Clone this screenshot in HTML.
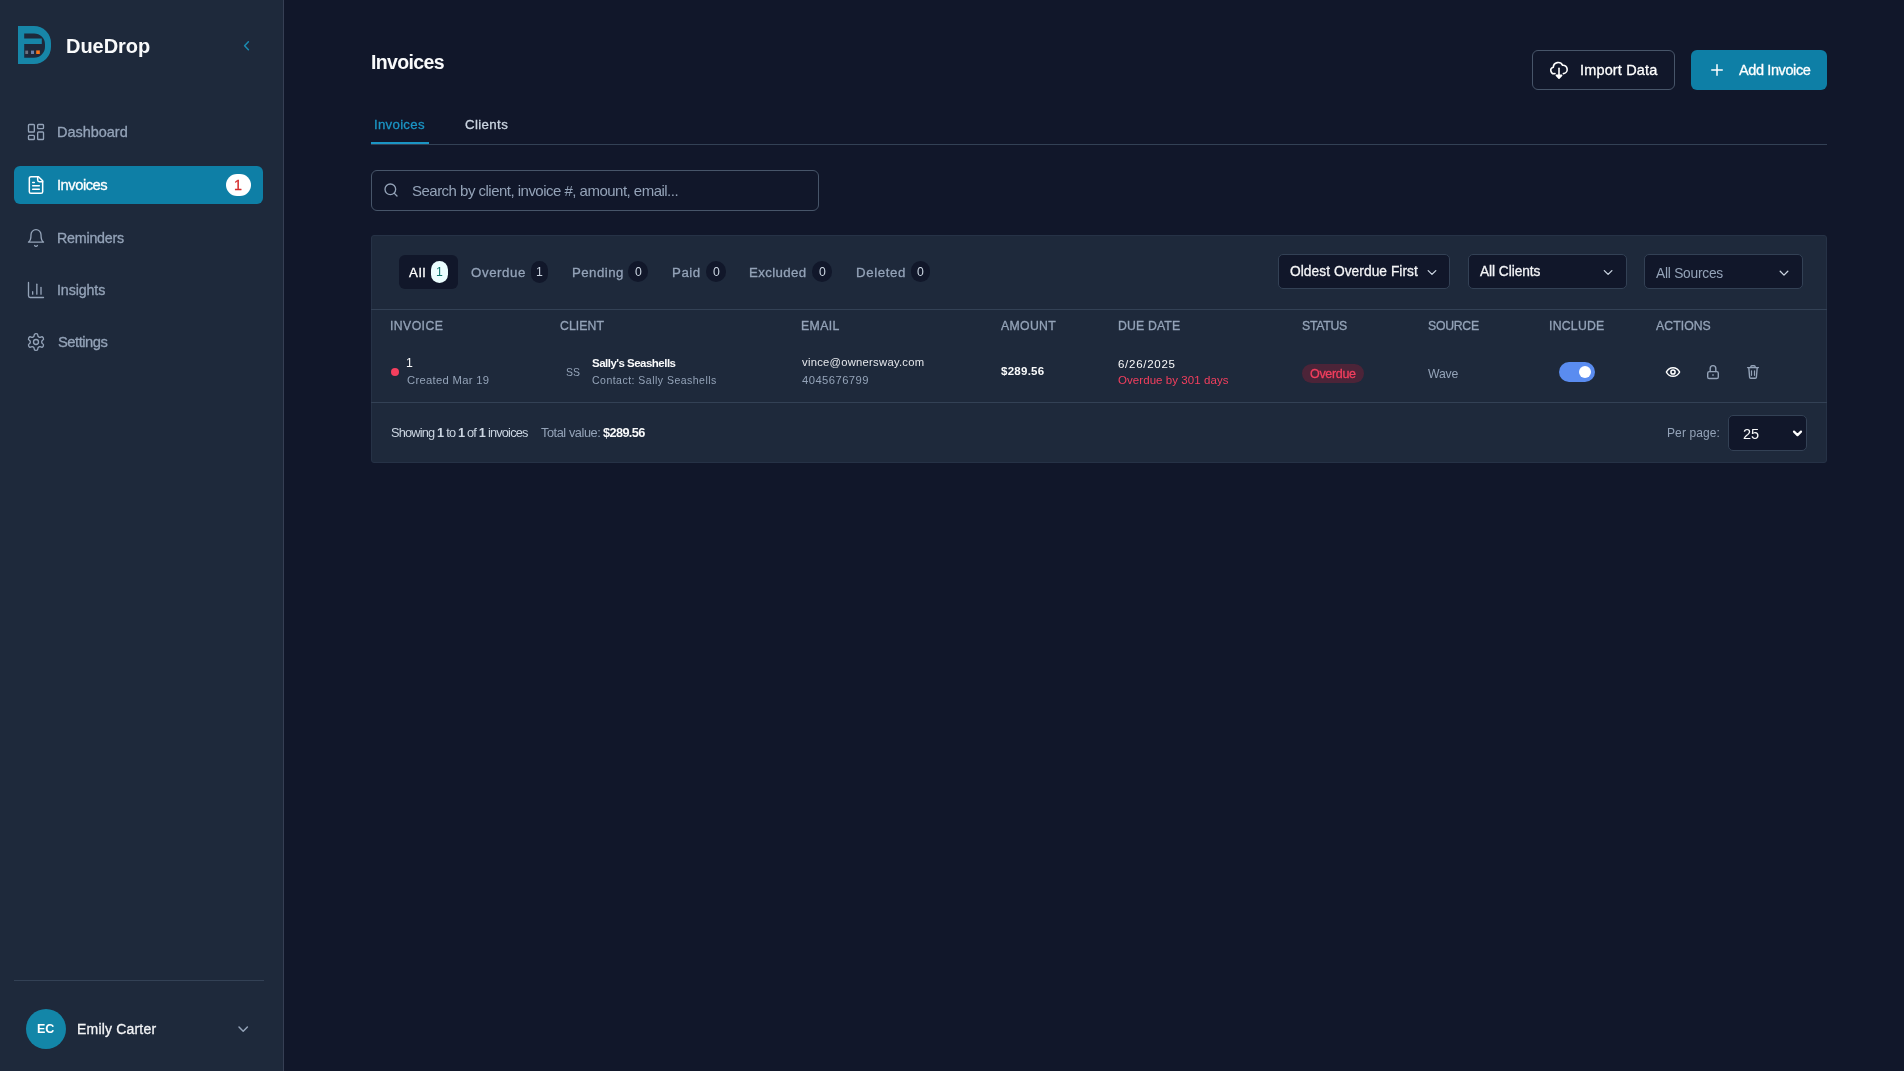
<!DOCTYPE html>
<html><head><meta charset="utf-8">
<style>
*{margin:0;padding:0;box-sizing:border-box}
html,body{width:1904px;height:1071px;overflow:hidden;background:#11172a;font-family:"Liberation Sans",sans-serif}
.t{position:absolute;white-space:nowrap;will-change:transform}
.a{position:absolute}
svg.i{position:absolute;fill:none;stroke-linecap:round;stroke-linejoin:round}
</style></head><body>
<!-- sidebar -->
<div class="a" style="left:0;top:0;width:284px;height:1071px;background:#1e293b;border-right:1px solid #363f54"></div>
<svg class="a" style="left:0;top:0" width="60" height="80" viewBox="0 0 60 80">
  <path d="M18 26H34A17 17 0 0 1 51 43V47A17 17 0 0 1 34 64H18Z M24.2 33.4H34A11 11 0 0 1 45 44.4V46.8A11 11 0 0 1 34 57.8H24.2Z" fill="#1786a8" fill-rule="evenodd"/>
  <rect x="24" y="38.5" width="17.8" height="5.5" fill="#1786a8"/>
  <rect x="25.3" y="50.6" width="2.8" height="3.4" fill="#6b7280"/>
  <rect x="31" y="50.6" width="3" height="3.4" fill="#6b7fa8"/>
  <rect x="36.2" y="50.4" width="3.6" height="3.6" fill="#f97316"/>
</svg>

<div class="a" style="left:14px;top:166px;width:249px;height:38px;background:#0e7fa6;border-radius:6px"></div>
<div class="a" style="left:226px;top:174px;width:25px;height:22px;background:#fff;border-radius:11px"></div>

<svg class="i" style="left:26px;top:122px" width="20" height="20" viewBox="0 0 24 24" stroke="#94a3b8" stroke-width="1.6"><rect width="7" height="9" x="3" y="3" rx="1"/><rect width="7" height="5" x="14" y="3" rx="1"/><rect width="7" height="9" x="14" y="12" rx="1"/><rect width="7" height="5" x="3" y="16" rx="1"/></svg>
<svg class="i" style="left:26px;top:175px" width="20" height="20" viewBox="0 0 24 24" stroke="#ffffff" stroke-width="1.8"><path d="M15 2H6a2 2 0 0 0-2 2v16a2 2 0 0 0 2 2h12a2 2 0 0 0 2-2V7Z"/><path d="M14 2v4a2 2 0 0 0 2 2h4"/><path d="M10 9H8"/><path d="M16 13H8"/><path d="M16 17H8"/></svg>
<svg class="i" style="left:26px;top:228px" width="20" height="20" viewBox="0 0 24 24" stroke="#94a3b8" stroke-width="1.6"><path d="M6 8a6 6 0 0 1 12 0c0 7 3 9 3 9H3s3-2 3-9"/><path d="M10.3 21a1.94 1.94 0 0 0 3.4 0"/></svg>
<svg class="i" style="left:26px;top:280px" width="20" height="20" viewBox="0 0 24 24" stroke="#94a3b8" stroke-width="1.6"><path d="M3 3v16a2 2 0 0 0 2 2h16"/><path d="M18 17V9"/><path d="M13 17V5"/><path d="M8 17v-3"/></svg>
<svg class="i" style="left:26px;top:332px" width="20" height="20" viewBox="0 0 24 24" stroke="#94a3b8" stroke-width="1.6"><path d="M12.22 2h-.44a2 2 0 0 0-2 2v.18a2 2 0 0 1-1 1.73l-.43.25a2 2 0 0 1-2 0l-.15-.08a2 2 0 0 0-2.73.73l-.22.38a2 2 0 0 0 .73 2.73l.15.1a2 2 0 0 1 1 1.72v.51a2 2 0 0 1-1 1.74l-.15.09a2 2 0 0 0-.73 2.73l.22.38a2 2 0 0 0 2.73.73l.15-.08a2 2 0 0 1 2 0l.43.25a2 2 0 0 1 1 1.73V20a2 2 0 0 0 2 2h.44a2 2 0 0 0 2-2v-.18a2 2 0 0 1 1-1.73l.43-.25a2 2 0 0 1 2 0l.15.08a2 2 0 0 0 2.73-.73l.22-.39a2 2 0 0 0-.73-2.73l-.15-.08a2 2 0 0 1-1-1.74v-.5a2 2 0 0 1 1-1.74l.15-.09a2 2 0 0 0 .73-2.73l-.22-.38a2 2 0 0 0-2.73-.73l-.15.08a2 2 0 0 1-2 0l-.43-.25a2 2 0 0 1-1-1.73V4a2 2 0 0 0-2-2z"/><circle cx="12" cy="12" r="3"/></svg>

<div class="a" style="left:14px;top:980px;width:250px;height:1px;background:#334155"></div>
<div class="a" style="left:26px;top:1009px;width:40px;height:40px;background:#1386a8;border-radius:50%"></div>

<!-- header -->
<div class="a" style="left:1532px;top:50px;width:143px;height:40px;border:1px solid #475569;border-radius:6px"></div>
<svg class="i" style="left:1545px;top:56px" width="28" height="28" viewBox="1545 56 28 28" stroke="#ffffff" stroke-width="1.6"><path d="M1555 73.6A3.2 3.2 0 0 1 1553.3 67.2A4.9 4.9 0 0 1 1562.6 65.3A3.9 3.9 0 0 1 1563.4 73.6"/><path d="M1559 68.2V77"/><path d="M1556.4 75.4L1559 78.2L1561.6 75.4Z" fill="#ffffff"/></svg>
<div class="a" style="left:1691px;top:50px;width:136px;height:40px;background:#0e7fa6;border-radius:6px"></div>
<svg class="i" style="left:1708px;top:61px" width="18" height="18" viewBox="0 0 24 24" stroke="#ffffff" stroke-width="2"><path d="M5 12h14"/><path d="M12 5v14"/></svg>

<div class="a" style="left:371px;top:144px;width:1456px;height:1px;background:#334155"></div>
<div class="a" style="left:371px;top:142px;width:58px;height:2px;background:#1b95c4"></div>

<div class="a" style="left:371px;top:170px;width:448px;height:41px;border:1px solid #475569;border-radius:6px;background:#11172a"></div>
<svg class="i" style="left:383px;top:182px" width="16" height="16" viewBox="0 0 24 24" stroke="#94a3b8" stroke-width="2"><circle cx="11" cy="11" r="8"/><path d="m21 21-4.3-4.3"/></svg>

<!-- card -->
<div class="a" style="left:371px;top:235px;width:1456px;height:228px;background:#1e293b;border:1px solid #263246;border-radius:3px"></div>
<div class="a" style="left:399px;top:255px;width:59px;height:34px;background:#11172a;border-radius:6px"></div>
<div class="a" style="left:431px;top:261px;width:17px;height:22px;background:#ecfeff;border-radius:11px"></div>
<div class="a" style="left:531px;top:261px;width:17px;height:22px;background:#11172a;border-radius:11px"></div>
<div class="a" style="left:628px;top:261px;width:20px;height:21px;background:#11172a;border-radius:11px"></div>
<div class="a" style="left:706px;top:261px;width:20px;height:21px;background:#11172a;border-radius:11px"></div>
<div class="a" style="left:812px;top:261px;width:20px;height:21px;background:#11172a;border-radius:11px"></div>
<div class="a" style="left:911px;top:261px;width:19px;height:21px;background:#11172a;border-radius:11px"></div>

<div class="a" style="left:1278px;top:254px;width:172px;height:35px;background:#11172a;border:1px solid #334155;border-radius:5px"></div>
<div class="a" style="left:1468px;top:254px;width:159px;height:35px;background:#11172a;border:1px solid #334155;border-radius:5px"></div>
<div class="a" style="left:1644px;top:254px;width:159px;height:35px;background:#11172a;border:1px solid #334155;border-radius:5px"></div>

<div class="a" style="left:371px;top:309px;width:1456px;height:1px;background:#334155"></div>
<div class="a" style="left:371px;top:402px;width:1456px;height:1px;background:#334155"></div>

<div class="a" style="left:391px;top:368px;width:8px;height:8px;background:#f43f5e;border-radius:50%"></div>
<div class="a" style="left:1302px;top:364px;width:62px;height:19px;background:#4c2438;border-radius:10px"></div>
<div class="a" style="left:1559px;top:362px;width:36px;height:20px;background:#5a8cf0;border-radius:10px"></div>
<div class="a" style="left:1578.7px;top:365.7px;width:12.6px;height:12.6px;background:#fff;border-radius:50%"></div>





<svg class="i" style="left:1660px;top:358px" width="106" height="28" viewBox="1660 358 106 28">
<g stroke="#ffffff" stroke-width="1.5"><path d="M1666.4 372C1669.2 366.2 1676.8 366.2 1679.6 372C1676.8 377.8 1669.2 377.8 1666.4 372Z"/><circle cx="1673" cy="372" r="2.1"/></g>
<g stroke="#94a3b8" stroke-width="1.4"><rect x="1707.7" y="371.6" width="10.6" height="6.9" rx="1.6"/><path d="M1710.2 371.6V368.4A2.8 2.8 0 0 1 1715.8 368.4V371.6"/><path d="M1713 374.8v.4"/>
<path d="M1747.6 367.6H1758.4"/><path d="M1750.9 367.6V366.6Q1750.9 365.7 1751.8 365.7H1754.2Q1755.1 365.7 1755.1 366.6V367.6"/><path d="M1748.8 367.6L1749.6 377.2Q1749.7 378.2 1750.7 378.2H1755.3Q1756.3 378.2 1756.4 377.2L1757.2 367.6"/><path d="M1751.5 370.8V375.3M1754.5 370.8V375.3" stroke-width="1.2"/></g>
</svg>
<div class="a" style="left:1728px;top:415px;width:79px;height:36px;background:#11172a;border:1px solid #334155;border-radius:5px"></div>

<svg class="i" style="left:0;top:0" width="1904" height="1071" viewBox="0 0 1904 1071">
<path d="M1428.2 270.6L1432 274.4L1435.8 270.6M1604.3 270.6L1608.1 274.4L1611.9 270.6M1780.2 271.3L1784 275.1L1787.8 271.3" stroke="#cbd5e1" stroke-width="1.3"/>
<path d="M1794 431.6L1797.5 435.1L1801 431.6" stroke="#ffffff" stroke-width="2.2"/>
<path d="M239 1027L243.2 1031.2L247.4 1027" stroke="#94a3b8" stroke-width="1.5"/>
<path d="M248.4 41.8L244.6 45.8L248.4 49.8" stroke="#1b8ab0" stroke-width="1.5"/>
</svg>
<div class="t" style="left:65.56px;top:35.87px;font-size:20.0px;line-height:20.0px;color:#f9fafb;font-weight:700;letter-spacing:-0.031px;">DueDrop</div>
<div class="t" style="left:57.41px;top:124.72px;font-size:14.5px;line-height:14.5px;color:#94a3b8;-webkit-text-stroke:0.3px #94a3b8;letter-spacing:-0.027px;">Dashboard</div>
<div class="t" style="left:57.24px;top:177.61px;font-size:14.75px;line-height:14.75px;color:#ffffff;-webkit-text-stroke:0.3px #ffffff;letter-spacing:-0.488px;">Invoices</div>
<div class="t" style="left:57.33px;top:230.93px;font-size:14.25px;line-height:14.25px;color:#94a3b8;-webkit-text-stroke:0.3px #94a3b8;letter-spacing:-0.215px;">Reminders</div>
<div class="t" style="left:57.18px;top:282.73px;font-size:14.25px;line-height:14.25px;color:#94a3b8;-webkit-text-stroke:0.3px #94a3b8;letter-spacing:-0.111px;">Insights</div>
<div class="t" style="left:57.83px;top:334.51px;font-size:14.75px;line-height:14.75px;color:#94a3b8;-webkit-text-stroke:0.3px #94a3b8;letter-spacing:-0.499px;">Settings</div>
<div class="t" style="left:234.24px;top:177.83px;font-size:14.25px;line-height:14.25px;color:#d42a2a;-webkit-text-stroke:0.3px #d42a2a;">1</div>
<div class="t" style="left:37.22px;top:1023.12px;font-size:12.5px;line-height:12.5px;color:#ffffff;font-weight:700;">EC</div>
<div class="t" style="left:77.25px;top:1021.85px;font-size:14.0px;line-height:14.0px;color:#f3f4f6;-webkit-text-stroke:0.3px #f3f4f6;letter-spacing:0.188px;">Emily Carter</div>
<div class="t" style="left:370.50px;top:52.89px;font-size:19.5px;line-height:19.5px;color:#f9fafb;font-weight:700;letter-spacing:-0.648px;">Invoices</div>
<div class="t" style="left:1579.66px;top:62.72px;font-size:14.5px;line-height:14.5px;color:#ffffff;-webkit-text-stroke:0.3px #ffffff;letter-spacing:0.159px;">Import Data</div>
<div class="t" style="left:1739.47px;top:62.72px;font-size:14.5px;line-height:14.5px;color:#ffffff;-webkit-text-stroke:0.3px #ffffff;letter-spacing:-0.390px;">Add Invoice</div>
<div class="t" style="left:374.18px;top:117.58px;font-size:13.25px;line-height:13.25px;color:#1b95c4;-webkit-text-stroke:0.3px #1b95c4;letter-spacing:0.271px;">Invoices</div>
<div class="t" style="left:464.53px;top:117.58px;font-size:13.25px;line-height:13.25px;color:#cbd5e1;-webkit-text-stroke:0.3px #cbd5e1;letter-spacing:0.375px;">Clients</div>
<div class="t" style="left:411.82px;top:182.70px;font-size:15.0px;line-height:15.0px;color:#94a3b8;letter-spacing:-0.517px;">Search by client, invoice #, amount, email...</div>
<div class="t" style="left:409.27px;top:265.58px;font-size:13.25px;line-height:13.25px;color:#ffffff;-webkit-text-stroke:0.3px #ffffff;letter-spacing:0.843px;">All</div>
<div class="t" style="left:471.17px;top:265.58px;font-size:13.25px;line-height:13.25px;color:#94a3b8;-webkit-text-stroke:0.3px #94a3b8;letter-spacing:0.599px;">Overdue</div>
<div class="t" style="left:571.51px;top:265.58px;font-size:13.25px;line-height:13.25px;color:#94a3b8;-webkit-text-stroke:0.3px #94a3b8;letter-spacing:0.452px;">Pending</div>
<div class="t" style="left:671.81px;top:265.58px;font-size:13.25px;line-height:13.25px;color:#94a3b8;-webkit-text-stroke:0.3px #94a3b8;letter-spacing:0.573px;">Paid</div>
<div class="t" style="left:748.91px;top:265.58px;font-size:13.25px;line-height:13.25px;color:#94a3b8;-webkit-text-stroke:0.3px #94a3b8;letter-spacing:0.362px;">Excluded</div>
<div class="t" style="left:855.51px;top:265.58px;font-size:13.25px;line-height:13.25px;color:#94a3b8;-webkit-text-stroke:0.3px #94a3b8;letter-spacing:0.612px;">Deleted</div>
<div class="t" style="left:436.09px;top:266.13px;font-size:12.25px;line-height:12.25px;color:#0f766e;">1</div>
<div class="t" style="left:536.09px;top:266.13px;font-size:12.25px;line-height:12.25px;color:#cbd5e1;">1</div>
<div class="t" style="left:634.59px;top:266.13px;font-size:12.25px;line-height:12.25px;color:#cbd5e1;">0</div>
<div class="t" style="left:712.59px;top:266.13px;font-size:12.25px;line-height:12.25px;color:#cbd5e1;">0</div>
<div class="t" style="left:818.79px;top:266.13px;font-size:12.25px;line-height:12.25px;color:#cbd5e1;">0</div>
<div class="t" style="left:917.19px;top:266.13px;font-size:12.25px;line-height:12.25px;color:#cbd5e1;">0</div>
<div class="t" style="left:1289.85px;top:265.06px;font-size:13.75px;line-height:13.75px;color:#f3f4f6;-webkit-text-stroke:0.3px #f3f4f6;letter-spacing:0.053px;">Oldest Overdue First</div>
<div class="t" style="left:1480.47px;top:265.06px;font-size:13.75px;line-height:13.75px;color:#f3f4f6;-webkit-text-stroke:0.3px #f3f4f6;letter-spacing:-0.071px;">All Clients</div>
<div class="t" style="left:1656.27px;top:267.36px;font-size:13.75px;line-height:13.75px;color:#94a3b8;letter-spacing:-0.232px;">All Sources</div>
<div class="t" style="left:390.17px;top:319.83px;font-size:12.25px;line-height:12.25px;color:#94a3b8;-webkit-text-stroke:0.3px #94a3b8;letter-spacing:0.414px;">INVOICE</div>
<div class="t" style="left:560.18px;top:319.83px;font-size:12.25px;line-height:12.25px;color:#94a3b8;-webkit-text-stroke:0.3px #94a3b8;letter-spacing:0.068px;">CLIENT</div>
<div class="t" style="left:800.80px;top:319.83px;font-size:12.25px;line-height:12.25px;color:#94a3b8;-webkit-text-stroke:0.3px #94a3b8;letter-spacing:0.412px;">EMAIL</div>
<div class="t" style="left:1001.08px;top:319.83px;font-size:12.25px;line-height:12.25px;color:#94a3b8;-webkit-text-stroke:0.3px #94a3b8;letter-spacing:0.325px;">AMOUNT</div>
<div class="t" style="left:1117.70px;top:319.83px;font-size:12.25px;line-height:12.25px;color:#94a3b8;-webkit-text-stroke:0.3px #94a3b8;letter-spacing:0.157px;">DUE DATE</div>
<div class="t" style="left:1302.44px;top:319.83px;font-size:12.25px;line-height:12.25px;color:#94a3b8;-webkit-text-stroke:0.3px #94a3b8;letter-spacing:-0.258px;">STATUS</div>
<div class="t" style="left:1427.54px;top:319.83px;font-size:12.25px;line-height:12.25px;color:#94a3b8;-webkit-text-stroke:0.3px #94a3b8;letter-spacing:-0.266px;">SOURCE</div>
<div class="t" style="left:1549.37px;top:319.83px;font-size:12.25px;line-height:12.25px;color:#94a3b8;-webkit-text-stroke:0.3px #94a3b8;letter-spacing:0.247px;">INCLUDE</div>
<div class="t" style="left:1655.98px;top:319.83px;font-size:12.25px;line-height:12.25px;color:#94a3b8;-webkit-text-stroke:0.3px #94a3b8;letter-spacing:0.056px;">ACTIONS</div>
<div class="t" style="left:406.37px;top:357.13px;font-size:12.25px;line-height:12.25px;color:#f9fafb;">1</div>
<div class="t" style="left:406.73px;top:374.97px;font-size:11.25px;line-height:11.25px;color:#94a3b8;letter-spacing:0.295px;">Created Mar 19</div>
<div class="t" style="left:565.52px;top:366.81px;font-size:10.5px;line-height:10.5px;color:#94a3b8;">SS</div>
<div class="t" style="left:592.47px;top:357.76px;font-size:11.5px;line-height:11.5px;color:#f9fafb;font-weight:700;letter-spacing:-0.515px;">Sally's Seashells</div>
<div class="t" style="left:592.27px;top:374.91px;font-size:10.5px;line-height:10.5px;color:#94a3b8;letter-spacing:0.482px;">Contact: Sally Seashells</div>
<div class="t" style="left:801.76px;top:357.47px;font-size:11.25px;line-height:11.25px;color:#e5e7eb;letter-spacing:0.254px;">vince@ownersway.com</div>
<div class="t" style="left:801.54px;top:375.07px;font-size:11.25px;line-height:11.25px;color:#94a3b8;letter-spacing:0.436px;">4045676799</div>
<div class="t" style="left:1000.95px;top:365.96px;font-size:11.5px;line-height:11.5px;color:#f9fafb;font-weight:700;letter-spacing:0.266px;">$289.56</div>
<div class="t" style="left:1118.12px;top:358.76px;font-size:11.5px;line-height:11.5px;color:#f9fafb;letter-spacing:0.726px;">6/26/2025</div>
<div class="t" style="left:1118.16px;top:374.96px;font-size:11.5px;line-height:11.5px;color:#f43f5e;letter-spacing:0.063px;">Overdue by 301 days</div>
<div class="t" style="left:1310.31px;top:368.22px;font-size:12.5px;line-height:12.5px;color:#f43f5e;-webkit-text-stroke:0.3px #f43f5e;letter-spacing:-0.316px;">Overdue</div>
<div class="t" style="left:1428.05px;top:367.63px;font-size:12.25px;line-height:12.25px;color:#94a3b8;letter-spacing:-0.187px;">Wave</div>
<div class="t" style="left:390.72px;top:427.30px;font-size:12.75px;line-height:12.75px;color:#cbd5e1;letter-spacing:-0.794px;">Showing <b>1</b> to <b>1</b> of <b>1</b> invoices</div>
<div class="t" style="left:540.61px;top:427.30px;font-size:12.75px;line-height:12.75px;color:#94a3b8;letter-spacing:-0.432px;">Total value:</div>
<div class="t" style="left:603.03px;top:427.30px;font-size:12.75px;line-height:12.75px;color:#f9fafb;font-weight:700;letter-spacing:-0.627px;">$289.56</div>
<div class="t" style="left:1666.82px;top:426.64px;font-size:12.0px;line-height:12.0px;color:#94a3b8;letter-spacing:0.105px;">Per page:</div>
<div class="t" style="left:1743.27px;top:426.62px;font-size:14.5px;line-height:14.5px;color:#f9fafb;letter-spacing:-0.091px;">25</div>

</body></html>
